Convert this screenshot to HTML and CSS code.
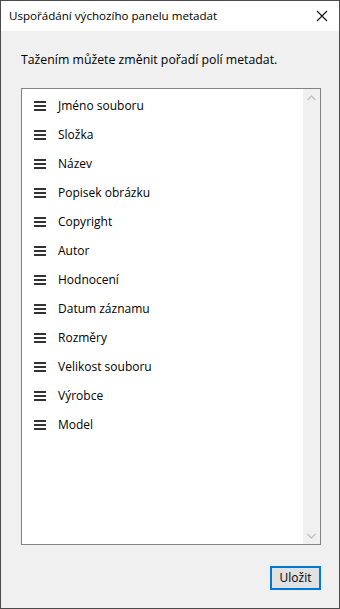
FILE: index.html
```html
<!DOCTYPE html>
<html lang="cs">
<head>
<meta charset="utf-8">
<title>Uspořádání výchozího panelu metadat</title>
<link rel="stylesheet" href="styles.css">
</head>
<body>
<div class="window">
  <div class="titlebar">
    <span class="title">Uspořádání výchozího panelu metadat</span>
    <span class="close">
      <svg width="12" height="12" viewBox="0 0 12 12"><path d="M1 1L11 11M11 1L1 11" stroke="#111" stroke-width="1.1" fill="none"/></svg>
    </span>
  </div>
  <div class="content">
    <p class="hint">Tažením můžete změnit pořadí polí metadat.</p>
    <div class="listbox">
      <ul class="items">
        <li><span class="grip"></span>Jméno souboru</li>
        <li><span class="grip"></span>Složka</li>
        <li><span class="grip"></span>Název</li>
        <li><span class="grip"></span>Popisek obrázku</li>
        <li><span class="grip"></span>Copyright</li>
        <li><span class="grip"></span>Autor</li>
        <li><span class="grip"></span>Hodnocení</li>
        <li><span class="grip"></span>Datum záznamu</li>
        <li><span class="grip"></span>Rozměry</li>
        <li><span class="grip"></span>Velikost souboru</li>
        <li><span class="grip"></span>Výrobce</li>
        <li><span class="grip"></span>Model</li>
      </ul>
      <div class="scrollbar">
        <span class="arrow"><svg width="9" height="6" viewBox="0 0 9 6"><path d="M0.5 5L4.5 1L8.5 5" stroke="#c2c2c2" stroke-width="1.4" fill="none"/></svg></span>
        <span class="arrow"><svg width="9" height="6" viewBox="0 0 9 6"><path d="M0.5 1L4.5 5L8.5 1" stroke="#c2c2c2" stroke-width="1.4" fill="none"/></svg></span>
      </div>
    </div>
    <div class="footer">
      <button class="save">Uložit</button>
    </div>
  </div>
</div>
</body>
</html>
```
FILE: styles.css
```css
html, body {
  margin: 0;
  padding: 0;
}
body {
  width: 340px;
  height: 609px;
  font-family: "Open Sans", "Noto Sans", "Liberation Sans", sans-serif;
  font-size: 12px;
  color: #000;
}
.window {
  box-sizing: border-box;
  width: 340px;
  height: 609px;
  background: #f0f0f0;
  border: 1px solid #4a4a4a;
  display: flex;
  flex-direction: column;
}
.titlebar {
  height: 30px;
  background: #fff;
  display: flex;
  align-items: center;
  justify-content: space-between;
  padding-left: 8px;
  flex-shrink: 0;
}
.title {
  font-size: 11.6px;
  line-height: 16px;
}
.close {
  width: 30px;
  display: flex;
  justify-content: center;
  align-items: center;
  margin-right: 2px;
}
.close svg {
  display: block;
}
.content {
  flex: 1;
  display: flex;
  flex-direction: column;
  padding: 0 18px 0 20px;
}
.hint {
  margin: 21px 0 0 0;
  line-height: 16px;
  font-size: 12.3px;
}
.listbox {
  margin-top: 20px;
  height: 457px;
  box-sizing: border-box;
  border: 1px solid #828282;
  background: #fff;
  display: flex;
}
.items {
  flex: 1;
  list-style: none;
  margin: 0;
  padding: 2px 0 0 0;
}
.items li {
  height: 29px;
  display: flex;
  align-items: center;
  line-height: 16px;
}
.grip {
  width: 12px;
  height: 10px;
  margin-left: 12px;
  margin-right: 12px;
  box-sizing: border-box;
  border-top: 2px solid #333;
  border-bottom: 2px solid #333;
  position: relative;
}
.grip::after {
  content: "";
  position: absolute;
  left: 0;
  right: 0;
  top: 2px;
  height: 2px;
  background: #333;
}
.scrollbar {
  width: 17px;
  background: #f0f0f0;
  display: flex;
  flex-direction: column;
  justify-content: space-between;
}
.arrow {
  height: 17px;
  display: flex;
  align-items: center;
  justify-content: center;
}
.arrow svg {
  display: block;
}
.footer {
  display: flex;
  justify-content: flex-end;
  margin-top: 21px;
}
.save {
  width: 51px;
  height: 24px;
  box-sizing: border-box;
  border: 2px solid #0078d7;
  background: #e1e1e1;
  font-family: inherit;
  font-size: 12px;
  color: #000;
  padding: 0;
  line-height: 18px;
}
```
